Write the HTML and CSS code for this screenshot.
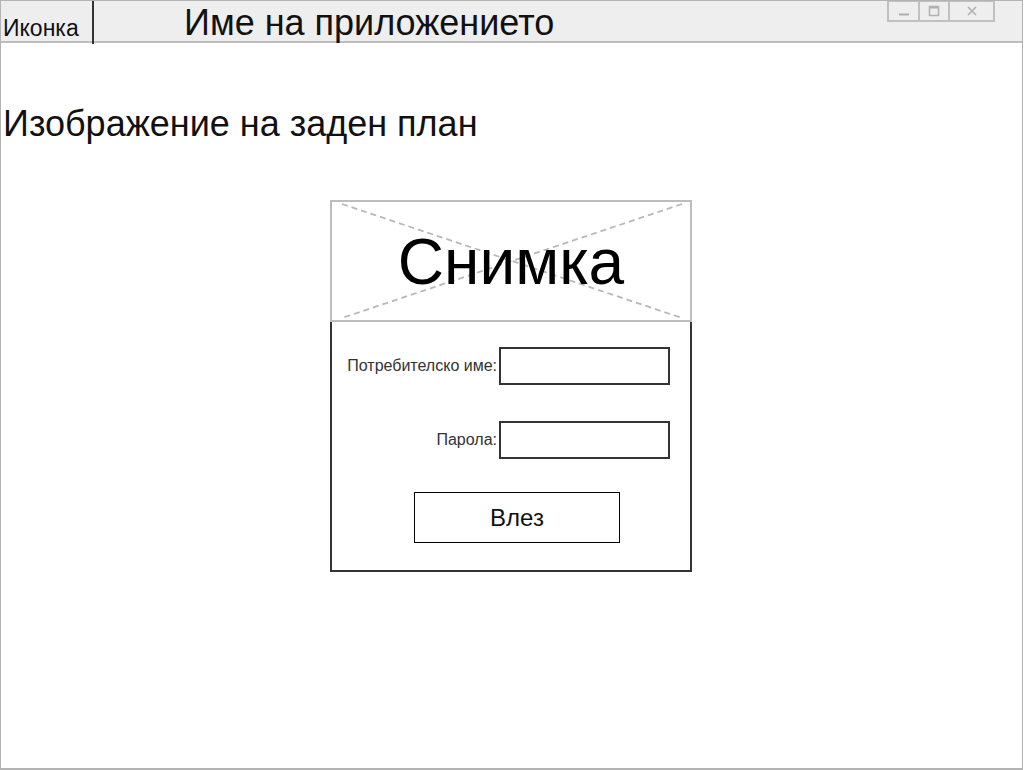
FILE: index.html
```html
<!DOCTYPE html>
<html lang="bg">
<head>
<meta charset="utf-8">
<title>Име на приложението</title>
<link rel="stylesheet" href="styles.css">
</head>
<body>
<div class="window">
  <div class="titlebar">
    <div class="icon-cell">Иконка</div>
    <div class="app-title">Име на приложението</div>
    <div class="win-buttons">
      <div class="wbtn wbtn-min"><svg width="12" height="12" viewBox="0 0 12 12"><line x1="1" y1="9.5" x2="11" y2="9.5" stroke="#b0b0b0" stroke-width="2"/></svg></div>
      <div class="wbtn wbtn-max"><svg width="12" height="12" viewBox="0 0 12 12"><rect x="1.5" y="1.5" width="9" height="9" fill="none" stroke="#b0b0b0" stroke-width="1.5"/><line x1="1.5" y1="2.5" x2="10.5" y2="2.5" stroke="#b0b0b0" stroke-width="2"/></svg></div>
      <div class="wbtn wbtn-close"><svg width="12" height="12" viewBox="0 0 12 12"><path d="M2 2 L10 10 M10 2 L2 10" stroke="#b0b0b0" stroke-width="1.6" fill="none"/></svg></div>
    </div>
  </div>
  <div class="content">
    <div class="bg-label">Изображение на заден план</div>
    <div class="card">
      <div class="picture">
        <svg class="picture-x" viewBox="0 0 358 118" preserveAspectRatio="none">
          <line x1="10" y1="2" x2="350" y2="116" stroke="#b8b8b8" stroke-width="1.8" stroke-dasharray="6 4"/>
          <line x1="350" y1="2" x2="10" y2="116" stroke="#b8b8b8" stroke-width="1.8" stroke-dasharray="6 4"/>
        </svg>
        <span class="picture-text">Снимка</span>
      </div>
      <div class="login">
        <div class="fields">
          <label class="field-label">Потребителско име:</label>
          <div class="field-input"></div>
          <label class="field-label">Парола:</label>
          <div class="field-input"></div>
        </div>
        <div class="login-btn">Влез</div>
      </div>
    </div>
  </div>
</div>
</body>
</html>
```

FILE: styles.css
```css
* { box-sizing: border-box; }
html, body { margin: 0; padding: 0; background: #ffffff; }
body { font-family: "Liberation Sans", Arial, sans-serif; color: #000; }

.window {
  width: 1023px;
  height: 770px;
  border: 1px solid #b3b3b3;
  border-bottom-width: 2px;
  display: flex;
  flex-direction: column;
}

.titlebar {
  height: 42px;
  background: #eeeeee;
  border-bottom: 2px solid #bdbdbd;
  display: flex;
  align-items: stretch;
  flex-shrink: 0;
}

.icon-cell {
  width: 93px;
  border-right: 2px solid #333333;
  margin-bottom: -3px;
  position: relative;
  z-index: 1;
  font-size: 23px;
  line-height: 24px;
  padding: 15px 0 0 2px;
  color: #111;
  white-space: nowrap;
}

.app-title {
  font-size: 36px;
  line-height: 36px;
  margin-left: 90px;
  padding-top: 4px;
  color: #111;
}

.win-buttons {
  margin-left: auto;
  margin-right: 27px;
  display: flex;
  align-self: flex-start;
  height: 21px;
  border: 2px solid #c0c0c0;
  border-top-width: 1px;
  background: #eeeeee;
}
.wbtn {
  display: flex;
  align-items: center;
  justify-content: center;
  height: 100%;
}
.wbtn-min { width: 31px; border-right: 2px solid #c0c0c0; }
.wbtn-max { width: 30px; border-right: 2px solid #c0c0c0; }
.wbtn-close { width: 43px; }

.content {
  flex: 1;
  display: flex;
  flex-direction: column;
}

.bg-label {
  font-size: 36px;
  line-height: 36px;
  margin-top: 63px;
  padding-left: 2px;
  color: #111;
}

.card {
  align-self: center;
  width: 362px;
  margin-top: 58px;
  margin-left: -1px;
}

.picture {
  position: relative;
  height: 122px;
  border: 2px solid #bdbdbd;
  display: flex;
  align-items: center;
  justify-content: center;
}
.picture-x {
  position: absolute;
  inset: 0;
  width: 100%;
  height: 100%;
}
.picture-text {
  position: relative;
  font-size: 64px;
  line-height: 74px;
  margin-top: 2px;
  color: #000;
}

.login {
  height: 251px;
  margin-top: -1px;
  border: 2px solid #333333;
  border-top: none;
  padding-top: 26px;
}

.fields {
  display: grid;
  grid-template-columns: 165px 171px;
  column-gap: 2px;
  row-gap: 36px;
  align-items: center;
}
.field-label {
  text-align: right;
  font-size: 16px;
  color: #333333;
  white-space: nowrap;
}
.field-input {
  height: 38px;
  border: 2px solid #333333;
  background: #fff;
}

.login-btn {
  margin: 33px 0 0 82px;
  width: 206px;
  height: 51px;
  border: 1px solid #000;
  display: flex;
  align-items: center;
  justify-content: center;
  font-size: 24px;
  color: #111;
}
```
